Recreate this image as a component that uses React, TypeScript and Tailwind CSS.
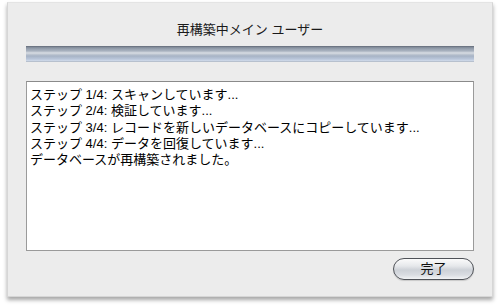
import React from "react";

const steps = [
  "ステップ 1/4: スキャンしています...",
  "ステップ 2/4: 検証しています...",
  "ステップ 3/4: レコードを新しいデータベースにコピーしています...",
  "ステップ 4/4: データを回復しています...",
  "データベースが再構築されました。",
];

const font = "font-['Liberation_Sans','Noto_Sans_CJK_JP',sans-serif]";

export default function App() {
  return (
    <div className={`w-[500px] h-[308px] bg-white pl-[7px] pr-[7px] pt-[2px] ${font}`}>
      <div className="flex h-[295px] flex-col border border-[#d6d6d6] border-t-[#e4e4e4] bg-[#ececec] px-[18px] shadow-[0_3px_4px_rgba(0,0,0,0.35)]">
        <div className="pt-[19px] text-center text-[13px] leading-[16px] text-[#1a1a1a]">
          再構築中メイン ユーザー
        </div>

        <div className="mt-[8px] h-[16px] w-full bg-[linear-gradient(to_bottom,#5d6472_0px,#7d8795_1px,#98a2b0_3px,#a9b2bf_5px,#d9dee5_7px,#c3cad4_8px,#a7b3c5_10px,#b9c6da_13px,#d0dbea_15px,#9ea6b2_16px)]" />

        <div className="mt-[19px] h-[170px] border border-[#9a9a9a] border-t-[#8a8a8a] bg-white px-[3px] pt-[5px] text-[13px] leading-[16.3px] text-black">
          {steps.map((s) => (
            <div key={s} className="whitespace-nowrap">
              {s}
            </div>
          ))}
        </div>

        <div className="mt-[7px] flex justify-end">
          <button className="flex h-[22px] w-[81px] items-center justify-center rounded-full border border-[#4f5258] bg-[linear-gradient(to_bottom,#fbfbfb_0%,#e6e8eb_35%,#cdd1d7_55%,#dadde2_80%,#f2f3f5_100%)] text-[13px] leading-[16px] text-[#111] shadow-[0_1px_1px_rgba(0,0,0,0.15)]">
            完了
          </button>
        </div>
      </div>
    </div>
  );
}
